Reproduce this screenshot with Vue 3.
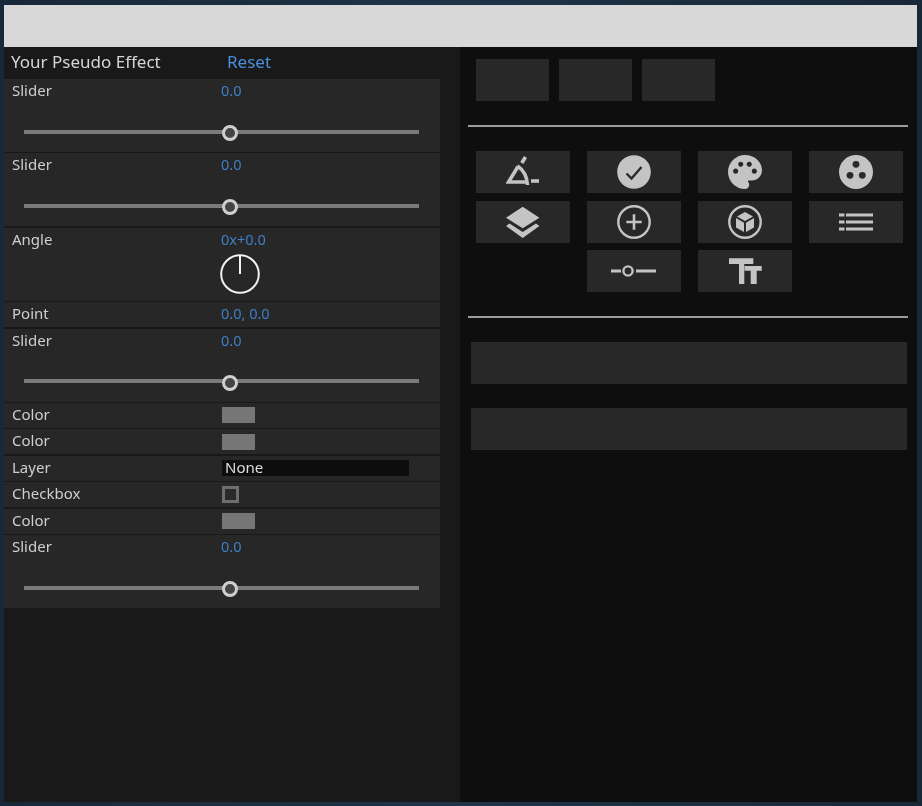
<script setup>
// Effect controls listed top to bottom in the left panel
const rows = [
  { label: 'Slider', type: 'slider', value: '0.0' },
  { label: 'Slider', type: 'slider', value: '0.0' },
  { label: 'Angle', type: 'angle', value: '0x+0.0' },
  { label: 'Point', type: 'point', value: '0.0, 0.0' },
  { label: 'Slider', type: 'slider', value: '0.0' },
  { label: 'Color', type: 'color' },
  { label: 'Color', type: 'color' },
  { label: 'Layer', type: 'layer' },
  { label: 'Checkbox', type: 'checkbox' },
  { label: 'Color', type: 'color' },
  { label: 'Slider', type: 'slider', value: '0.0' },
]
</script>

<template>
  <div class="frame">
    <div class="app">
      <header class="top-bar"></header>
      <div class="body">
        <section class="left">
          <div class="title-row">
            <span class="title">Your Pseudo Effect</span>
            <span class="reset">Reset</span>
          </div>
          <div class="rows">
            <div
              v-for="(row, i) in rows"
              :key="i"
              :class="['row', { tall: row.type === 'slider' || row.type === 'angle' }]"
            >
              <div class="row-head">
                <span class="label">{{ row.label }}</span>
                <span v-if="row.value" class="value">{{ row.value }}</span>
                <span v-if="row.type === 'color'" class="swatch"></span>
                <span v-if="row.type === 'layer'" class="select">None</span>
                <span v-if="row.type === 'checkbox'" class="check"></span>
              </div>
              <div v-if="row.type === 'slider'" class="slider">
                <div class="track"></div>
                <div class="thumb"></div>
              </div>
              <svg v-if="row.type === 'angle'" class="dial" width="42" height="42" viewBox="0 0 42 42">
                <circle cx="21" cy="21" r="18.8" fill="none" stroke="#f2f2f2" stroke-width="2" />
                <line x1="21" y1="2" x2="21" y2="21" stroke="#f2f2f2" stroke-width="2" />
              </svg>
            </div>
          </div>
        </section>

        <section class="right">
          <div class="small-buttons">
            <div class="btn small"></div>
            <div class="btn small"></div>
            <div class="btn small"></div>
          </div>
          <hr class="divider first" />
          <div class="tools">
            <div class="btn tool">
              <svg width="34" height="34" viewBox="0 0 34 34" fill="none" stroke="#c4c4c4" stroke-width="3.6">
                <path d="M19.5 2 15.8 8M12 11.5 2.5 27H22" />
                <path d="M11.5 11c6 4 9.5 10 10 19" />
                <path d="M25 26h8" />
              </svg>
            </div>
            <div class="btn tool">
              <svg width="34" height="34" viewBox="0 0 34 34">
                <circle cx="17" cy="17" r="16.8" fill="#c4c4c4" />
                <path d="M9.5 18.5 14.5 23.5 24.5 12" fill="none" stroke="#2a2a2a" stroke-width="2.4" />
              </svg>
            </div>
            <div class="btn tool">
              <svg width="34" height="34" viewBox="2 2 20 20">
                <path fill="#c4c4c4" d="M12 2C6.49 2 2 6.49 2 12s4.49 10 10 10c1.38 0 2.5-1.12 2.5-2.5 0-.61-.23-1.2-.64-1.67-.08-.1-.13-.21-.13-.33 0-.28.22-.5.5-.5H16c3.31 0 6-2.69 6-6 0-4.96-4.49-9-10-9zm-5.5 11c-.83 0-1.5-.67-1.5-1.5S5.67 10 6.5 10s1.5.67 1.5 1.5S7.33 13 6.5 13zm3-4C8.67 9 8 8.33 8 7.5S8.67 6 9.5 6s1.5.67 1.5 1.5S10.33 9 9.5 9zm5 0c-.83 0-1.5-.67-1.5-1.5S13.67 6 14.5 6s1.5.67 1.5 1.5S15.33 9 14.5 9zm3 4c-.83 0-1.5-.67-1.5-1.5s.67-1.5 1.5-1.5 1.5.67 1.5 1.5-.67 1.5-1.5 1.5z" />
              </svg>
            </div>
            <div class="btn tool">
              <svg width="34" height="34" viewBox="0 0 34 34">
                <circle cx="17" cy="17" r="17" fill="#c4c4c4" />
                <circle cx="17" cy="9.3" r="3.4" fill="#2a2a2a" />
                <circle cx="11" cy="20.3" r="3.4" fill="#2a2a2a" />
                <circle cx="23.3" cy="20.3" r="3.4" fill="#2a2a2a" />
              </svg>
            </div>
            <div class="btn tool">
              <svg width="34" height="34" viewBox="0 0 34 34" fill="#c4c4c4">
                <polygon points="16.7,1.7 33.4,12.7 16.7,23.3 0,12.7" />
                <polygon points="0,21 3.5,18.5 16.7,27 30,18.5 33.4,21 16.7,33" />
              </svg>
            </div>
            <div class="btn tool">
              <svg width="34" height="34" viewBox="0 0 34 34" fill="none" stroke="#c4c4c4">
                <circle cx="17" cy="17" r="15.7" stroke-width="2.4" />
                <path d="M9.3 17h15.4M17 9.3v15.4" stroke-width="2.6" />
              </svg>
            </div>
            <div class="btn tool">
              <svg width="34" height="34" viewBox="0 0 34 34">
                <circle cx="17" cy="17" r="15.7" fill="none" stroke="#c4c4c4" stroke-width="2.4" />
                <g fill="#c4c4c4">
                  <polygon points="17,7 25,11.5 17,16 9,11.5" />
                  <polygon points="8,13 16,17.7 16,27 8,22.5" />
                  <polygon points="18,17.7 26,13 26,22.5 18,27" />
                </g>
              </svg>
            </div>
            <div class="btn tool">
              <svg width="34" height="34" viewBox="0 0 34 34" stroke="#c4c4c4" stroke-width="3">
                <path d="M0 10h5.5M7 10h27M0 17h5.5M7 17h27M0 24h5.5M7 24h27" />
              </svg>
            </div>
            <div class="btn tool">
              <svg width="46" height="34" viewBox="0 0 46 34" fill="none" stroke="#c4c4c4">
                <path d="M0 17h10M25 17h20" stroke-width="3" />
                <circle cx="17" cy="17" r="4.6" stroke-width="2.4" />
              </svg>
            </div>
            <div class="btn tool">
              <svg width="34" height="34" viewBox="0 0 34 34" fill="#c4c4c4">
                <path d="M1 4.3h24.3V10H16.3v20H11V10H1z" />
                <path d="M16.5 12h17.2v4.7h-5V30h-6V16.7h-6.2z" />
              </svg>
            </div>
          </div>
          <hr class="divider second" />
          <div class="wide btn"></div>
          <div class="wide btn"></div>
        </section>
      </div>
    </div>
  </div>
</template>

<style>
html, body { margin: 0; background: #1b2d3f; }
</style>

<style scoped>
.frame {
  height: 806px;
  box-sizing: border-box;
  padding: 5px 5px 4px 4px;
  background: linear-gradient(90deg, #182838, #1f3448 50%, #182838);
  font-family: "Noto Sans", "Open Sans", sans-serif;
}
.app {
  height: 100%;
  display: flex;
  flex-direction: column;
  filter: blur(0.4px);
}
.top-bar {
  height: 42px;
  flex: none;
  background: #d8d8d8;
}
.body {
  flex: 1;
  display: flex;
  min-height: 0;
}

/* left panel */
.left {
  width: 456px;
  flex: none;
  background: #191919;
}
.title-row {
  height: 32px;
  display: flex;
  align-items: center;
  padding-left: 7px;
  padding-bottom: 4px;
  box-sizing: border-box;
  font-size: 17px;
}
.title {
  width: 216px;
  color: #d6d6d6;
}
.reset {
  color: #4a8fdc;
}
.rows {
  width: 436px;
  display: flex;
  flex-direction: column;
  gap: 1.4px;
}
.row {
  height: 25px;
  background: #272727;
  padding-left: 8px;
}
.row.tall {
  height: 73px;
}
.row-head {
  height: 25px;
  display: flex;
  align-items: center;
  font-size: 14.5px;
}
.label {
  width: 209px;
  flex: none;
  color: #cfcfcf;
  font-size: 15px;
  margin-bottom: 3px;
}
.value {
  color: #3f7fc6;
  margin-bottom: 3px;
}
.swatch {
  width: 33px;
  height: 16px;
  margin-left: 1px;
  background: #767676;
}
.select {
  width: 184px;
  height: 16px;
  margin-left: 1px;
  padding-left: 3px;
  background: #0d0d0d;
  color: #dedede;
  font-size: 15px;
  line-height: 15px;
}
.check {
  width: 17px;
  height: 17px;
  margin-left: 1px;
  box-sizing: border-box;
  border: 3px solid #6e6e6e;
  background: #2a2a2a;
}
.slider {
  position: relative;
  margin: 25.7px 0 0 12px;
  width: 395px;
  height: 4px;
}
.track {
  height: 100%;
  background: #7a7a7a;
}
.thumb {
  position: absolute;
  left: 198px;
  top: -4.7px;
  width: 16px;
  height: 16px;
  box-sizing: border-box;
  border: 3px solid #cfcfcf;
  border-radius: 50%;
  background: #444;
}
.dial {
  display: block;
  margin: 0 0 0 207px;
}

/* right panel */
.right {
  flex: 1;
  background: #0e0e0e;
  padding: 12px 0 0 8px;
}
.btn {
  background: #282828;
}
.small-buttons {
  display: flex;
  gap: 10px;
  padding-left: 8px;
}
.small {
  width: 73px;
  height: 42px;
}
.divider {
  width: 440px;
  height: 2px;
  margin: 0;
  border: 0;
  background: #9c9c9c;
}
.divider.first {
  margin-top: 24px;
}
.divider.second {
  margin-top: 24px;
}
.tools {
  width: 427px;
  margin: 24px 0 0 8px;
  display: flex;
  flex-wrap: wrap;
  justify-content: center;
  gap: 7.5px 17px;
}
.tool {
  width: 94px;
  height: 42px;
  display: flex;
  align-items: center;
  justify-content: center;
}
.wide {
  width: 436px;
  height: 42px;
  margin: 24px 0 0 3px;
}
</style>
